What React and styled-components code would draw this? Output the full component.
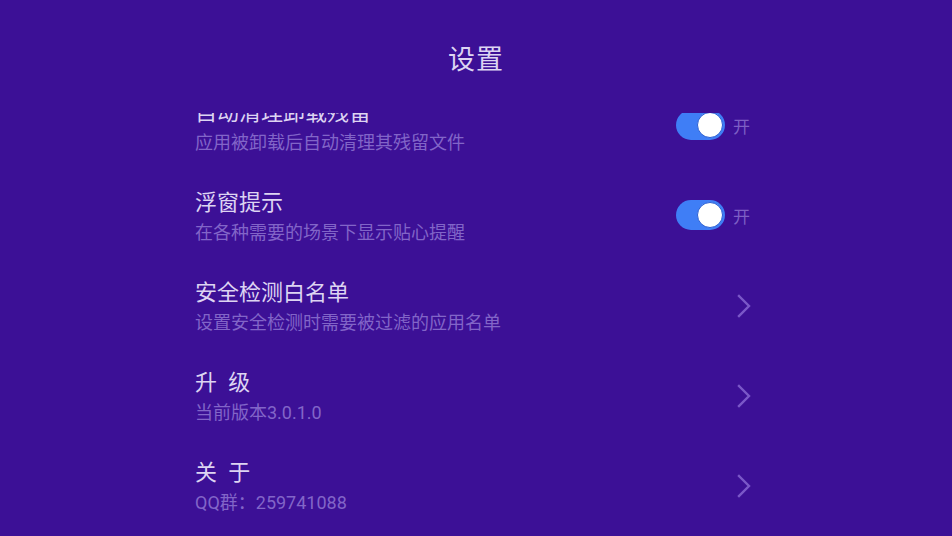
import React, { useLayoutEffect, useRef } from "react";
import styled, { createGlobalStyle } from "styled-components";

const GlobalStyle = createGlobalStyle`
    html, body {
        margin: 0;
        padding: 0;
        background: #3c1096;
    }
    body {
        font-family: Roboto, "Noto Sans CJK SC", sans-serif;
    }
`;

const Page = styled.main`
    width: 952px;
    height: 536px;
    background-color: #3c1096;
    overflow: hidden;

    display: flex;
    flex-direction: column;
`;

const Header = styled.header`
    height: 113px;
    flex-shrink: 0;

    display: flex;
    justify-content: center;
    padding-top: 42px;
    box-sizing: border-box;

    h1 {
        margin: 0;
        font-size: 27px;
        line-height: 36px;
        font-weight: 400;
        color: #ddd4f2;
        letter-spacing: 1px;
    }
`;

const List = styled.section`
    flex: 1;
    overflow: hidden;
`;

const Inner = styled.div`
    width: 562px;
    margin: 0 auto;
    padding-bottom: 12px;
`;

const Row = styled.div`
    height: 90px;
    padding-right: 7px;

    display: flex;
    align-items: center;
    justify-content: space-between;
`;

const Texts = styled.div`
    display: flex;
    flex-direction: column;
`;

const Title = styled.span`
    font-size: 22px;
    line-height: 30px;
    color: #ddd4f2;
`;

const Sub = styled.span`
    font-size: 18px;
    line-height: 30px;
    color: #8265c8;
`;

const Switch = styled.div`
    display: flex;
    align-items: center;
    gap: 8px;
    margin-top: -6px;

    span {
        font-size: 17px;
        color: #7d5fc4;
    }
`;

const Track = styled.div`
    width: 49px;
    height: 30px;
    border-radius: 15px;
    background: ${(p) => (p.$on ? "#3f7ef6" : "#6a4bb8")};
    position: relative;

    &::after {
        content: "";
        position: absolute;
        top: 2px;
        left: ${(p) => (p.$on ? "21px" : "2px")};
        width: 24px;
        height: 24px;
        border-radius: 50%;
        background: #ffffff;
        border: 1px solid #2c5fd2;
    }
`;

const Arrow = styled.svg`
    margin: -4px -1px 0 0;
`;

const Chevron = () => (
    <Arrow width="14" height="24" viewBox="0 0 14 24">
        <polyline
            points="2,2 12,12 2,22"
            fill="none"
            stroke="#7a58c8"
            strokeWidth="2.4"
            strokeLinecap="square"
        />
    </Arrow>
);

const settings = [
    { title: "自动清理卸载残留", sub: "应用被卸载后自动清理其残留文件", type: "switch" },
    { title: "浮窗提示", sub: "在各种需要的场景下显示贴心提醒", type: "switch" },
    { title: "安全检测白名单", sub: "设置安全检测时需要被过滤的应用名单", type: "link" },
    { title: "升\u2002级", sub: "当前版本3.0.1.0", type: "link" },
    { title: "关\u2002于", sub: "QQ群：259741088", type: "link" },
];

export default function App() {
    const listRef = useRef(null);

    useLayoutEffect(() => {
        if (listRef.current) listRef.current.scrollTop = 30;
    }, []);

    return (
        <Page>
            <GlobalStyle />
            <Header>
                <h1>设置</h1>
            </Header>

            <List ref={listRef}>
                <Inner>
                    {settings.map((item) => (
                        <Row key={item.sub}>
                            <Texts>
                                <Title>{item.title}</Title>
                                <Sub>{item.sub}</Sub>
                            </Texts>
                            {item.type === "switch" ? (
                                <Switch>
                                    <Track $on />
                                    <span>开</span>
                                </Switch>
                            ) : (
                                <Chevron />
                            )}
                        </Row>
                    ))}
                </Inner>
            </List>
        </Page>
    );
}
